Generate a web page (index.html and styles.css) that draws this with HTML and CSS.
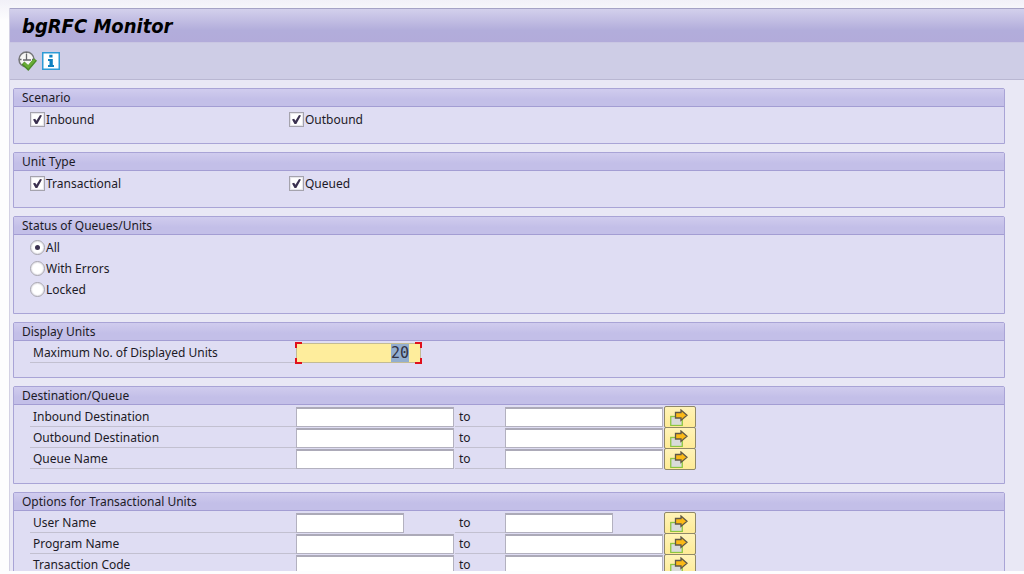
FILE: index.html
```html
<!DOCTYPE html>
<html lang="en">
<head>
    <meta charset="UTF-8">
    <meta name="viewport" content="width=device-width, initial-scale=1.0">
    <title>bgRFC Monitor</title>
    <link rel="stylesheet" href="styles.css">
</head>
<body>
    <!-- shared arrow for the multiple selection buttons -->
    <svg class="symbols" aria-hidden="true">
        <symbol id="multi" viewBox="0 0 18 17">
            <rect x="0.75" y="7.5" width="11.5" height="9" fill="#d9dbd9" stroke="#8cc63f" stroke-width="1.3"/>
            <path d="M5.500 3.500h5.500V1l6 5.200-6 5.200V9h-5.500z" fill="#fbb916" stroke="#5f5848" stroke-width="1.3"/>
        </symbol>
    </svg>

    <main class="window">
        <h1 class="title">bgRFC Monitor</h1>
        <div class="toolbar">
            <button type="button" class="tool" aria-label="Execute">
                <svg width="20" height="20" viewBox="0 0 20 20">
                    <circle cx="8.5" cy="8.5" r="7.5" fill="#f7f7f5" stroke="#77787a" stroke-width="1.5"/>
                    <path d="M8.5 3v6M5 9h8M8.5 1v1.500M1.500 8.500h2M14 8.500h1.500" fill="none" stroke="#66676b" stroke-width="1.300"/>
                    <path d="M5 12l5.200 5 7.300-8.500" fill="none" stroke="#4a8a2a" stroke-width="4"/>
                    <path d="M5.700 12l4.500 4 6.500-7.300" fill="none" stroke="#69ad35" stroke-width="2.400"/>
                </svg>
            </button>
            <button type="button" class="tool" aria-label="Information">
                <svg width="18" height="18" viewBox="0 0 18 18">
                    <rect x="0.75" y="0.75" width="16.500" height="16.500" fill="#fff" stroke="#2e9bd6" stroke-width="1.500"/>
                    <path d="M7.300 2.800h3.200v2.700H7.300zM6 7h4.800v6H12v2H6v-2h1.500V9H6z" fill="#0f80c0"/>
                </svg>
            </button>
        </div>

        <form class="content">
            <section class="panel">
                <h2>Scenario</h2>
                <div class="body">
                    <div class="checks">
                        <label class="option"><input type="checkbox" checked>Inbound</label>
                        <label class="option"><input type="checkbox" checked>Outbound</label>
                    </div>
                </div>
            </section>

            <section class="panel">
                <h2>Unit Type</h2>
                <div class="body">
                    <div class="checks">
                        <label class="option"><input type="checkbox" checked>Transactional</label>
                        <label class="option"><input type="checkbox" checked>Queued</label>
                    </div>
                </div>
            </section>

            <section class="panel">
                <h2>Status of Queues/Units</h2>
                <div class="body">
                    <label class="option"><input type="radio" name="status" checked>All</label>
                    <label class="option"><input type="radio" name="status">With Errors</label>
                    <label class="option"><input type="radio" name="status">Locked</label>
                </div>
            </section>

            <section class="panel">
                <h2>Display Units</h2>
                <div class="body">
                    <div class="row">
                        <label class="name" for="max-units">Maximum No. of Displayed Units</label>
                        <span class="focus-frame"><input type="text" class="number" id="max-units" value="20"></span>
                    </div>
                </div>
            </section>

            <section class="panel">
                <h2>Destination/Queue</h2>
                <div class="body">
                    <div class="row">
                        <label class="name" for="in-from">Inbound Destination</label>
                        <input type="text" class="field" id="in-from">
                        <label class="to" for="in-to">to</label>
                        <input type="text" class="field" id="in-to">
                        <button type="button" class="more" aria-label="Multiple selection"><svg><use href="#multi"/></svg></button>
                    </div>
                    <div class="row">
                        <label class="name" for="out-from">Outbound Destination</label>
                        <input type="text" class="field" id="out-from">
                        <label class="to" for="out-to">to</label>
                        <input type="text" class="field" id="out-to">
                        <button type="button" class="more" aria-label="Multiple selection"><svg><use href="#multi"/></svg></button>
                    </div>
                    <div class="row">
                        <label class="name" for="queue-from">Queue Name</label>
                        <input type="text" class="field" id="queue-from">
                        <label class="to" for="queue-to">to</label>
                        <input type="text" class="field" id="queue-to">
                        <button type="button" class="more" aria-label="Multiple selection"><svg><use href="#multi"/></svg></button>
                    </div>
                </div>
            </section>

            <section class="panel">
                <h2>Options for Transactional Units</h2>
                <div class="body">
                    <div class="row">
                        <label class="name" for="user-from">User Name</label>
                        <input type="text" class="field short" id="user-from">
                        <label class="to" for="user-to">to</label>
                        <input type="text" class="field short" id="user-to">
                        <button type="button" class="more" aria-label="Multiple selection"><svg><use href="#multi"/></svg></button>
                    </div>
                    <div class="row">
                        <label class="name" for="prog-from">Program Name</label>
                        <input type="text" class="field" id="prog-from">
                        <label class="to" for="prog-to">to</label>
                        <input type="text" class="field" id="prog-to">
                        <button type="button" class="more" aria-label="Multiple selection"><svg><use href="#multi"/></svg></button>
                    </div>
                    <div class="row">
                        <label class="name" for="tcode-from">Transaction Code</label>
                        <input type="text" class="field" id="tcode-from">
                        <label class="to" for="tcode-to">to</label>
                        <input type="text" class="field" id="tcode-to">
                        <button type="button" class="more" aria-label="Multiple selection"><svg><use href="#multi"/></svg></button>
                    </div>
                </div>
            </section>
        </form>
    </main>

    <script>
        const maxUnits = document.getElementById('max-units');
        maxUnits.focus();
        maxUnits.select();
    </script>
</body>
</html>
```
FILE: styles.css
```css
* {
    box-sizing: border-box;
}
body {
    display: flex;
    flex-direction: column;
    height: 100vh;
    margin: 0;
    padding: 8px 0 3px 9px;
    overflow: hidden;
    background: linear-gradient(#f1f0f8, #fdfdfe 20px);
    color: #1c1a26;
    font-family: "Noto Sans", Tahoma, sans-serif;
    font-size: 12px;
}
.symbols {
    display: none;
}
.window {
    flex: 1;
    min-height: 0;
    overflow: hidden;
    border-left: 1px solid #d3d1e4;
    background-color: #e9e8f5;
}
.title {
    height: 35px;
    margin: 0;
    padding-left: 12px;
    border-top: 1px solid #a5a2c6;
    border-bottom: 1px solid #c9c6e2;
    background: linear-gradient(#d3d0ec, #b2addb 65%, #b2abda);
    color: #000;
    font-family: "DejaVu Sans Condensed", Tahoma, sans-serif;
    font-size: 20px;
    font-style: italic;
    font-weight: bold;
    line-height: 34px;
}
.toolbar {
    display: flex;
    align-items: center;
    gap: 4px;
    height: 37px;
    padding-left: 8px;
    border-bottom: 1px solid #b9b7d2;
    background-color: #cecde6;
}
.tool {
    padding: 0;
    border: 0;
    background: none;
}
.tool svg {
    display: block;
}
.content {
    display: flex;
    flex-direction: column;
    gap: 8px;
    padding: 8px 19px 0 3px;
}
.panel {
    border: 1px solid #a9a4d6;
    border-radius: 2px 2px 0 0;
    background-color: #dfddf3;
}
.panel h2 {
    height: 18px;
    margin: 0;
    padding-left: 8px;
    border-bottom: 1px solid #a39dd3;
    background: linear-gradient(#d0ccee, #c3bfe8 60%);
    font-size: 12px;
    font-weight: normal;
    line-height: 18px;
}
.body {
    padding: 2px 16px 13px;
}
.checks {
    display: grid;
    grid-template-columns: 259px 1fr;
}
.option {
    display: flex;
    align-items: center;
    gap: 1px;
    height: 21px;
}
.option input {
    appearance: none;
    display: grid;
    place-content: center;
    width: 15px;
    height: 15px;
    margin: 0;
    border: 1px solid #a5a3ad;
    background-color: #fff;
    box-shadow: inset 0 0 1px 1px #e4e3e8;
}
.option input[type="radio"] {
    border-radius: 50%;
}
.option input[type="checkbox"]:checked::before {
    content: "";
    width: 9px;
    height: 9px;
    background-color: #3b3150;
    clip-path: polygon(0 50%, 24% 42%, 38% 64%, 78% 0, 100% 5%, 48% 100%, 28% 100%);
}
.option input[type="radio"]:checked::before {
    content: "";
    width: 5px;
    height: 5px;
    border-radius: 50%;
    background-color: #3b3150;
}
.row {
    display: grid;
    grid-template-columns: 266px 158px 51px 158px 33px;
    height: 21px;
}
.name, .to {
    height: 20px;
    border-bottom: 1px solid #c2c0d0;
    line-height: 20px;
}
.name {
    padding-left: 3px;
}
.to {
    margin-left: 1px;
    padding-left: 4px;
}
.field {
    width: 100%;
    height: 20px;
    border: 1px solid #b3b1bf;
    border-top: 2px solid #acaab8;
    background-color: #fff;
}
.short {
    width: 108px;
}
.more {
    width: 32px;
    height: 22px;
    margin: -1px 0 0 1px;
    padding: 0 0 0 5px;
    border: 1px solid #8f8868;
    border-radius: 2px;
    background: linear-gradient(#fff3b8, #feeb96);
    text-align: left;
}
.more svg {
    display: block;
    width: 18px;
    height: 17px;
}
.focus-frame {
    position: relative;
    width: 127px;
    height: 22px;
    margin: -1px 0 0 -1px;
    padding: 1px;
}
/* red corner marks over the active field */
.focus-frame::after {
    content: "";
    position: absolute;
    inset: 0;
    pointer-events: none;
    background:
        linear-gradient(#e0101c, #e0101c) 0 0 / 7px 2px,
        linear-gradient(#e0101c, #e0101c) 0 0 / 2px 6px,
        linear-gradient(#e0101c, #e0101c) 100% 0 / 7px 2px,
        linear-gradient(#e0101c, #e0101c) 100% 0 / 2px 6px,
        linear-gradient(#e0101c, #e0101c) 0 100% / 7px 2px,
        linear-gradient(#e0101c, #e0101c) 0 100% / 2px 6px,
        linear-gradient(#e0101c, #e0101c) 100% 100% / 7px 2px,
        linear-gradient(#e0101c, #e0101c) 100% 100% / 2px 6px;
    background-repeat: no-repeat;
}
.number {
    display: block;
    width: 100%;
    height: 20px;
    padding: 0 11px 0 0;
    border: 1px solid #c3bb94;
    outline: none;
    background-color: #feed9c;
    color: #333344;
    font-family: "DejaVu Sans Mono", monospace;
    font-size: 15px;
    text-align: right;
}
.number::selection {
    background-color: #93aecf;
    color: #333344;
}
```
